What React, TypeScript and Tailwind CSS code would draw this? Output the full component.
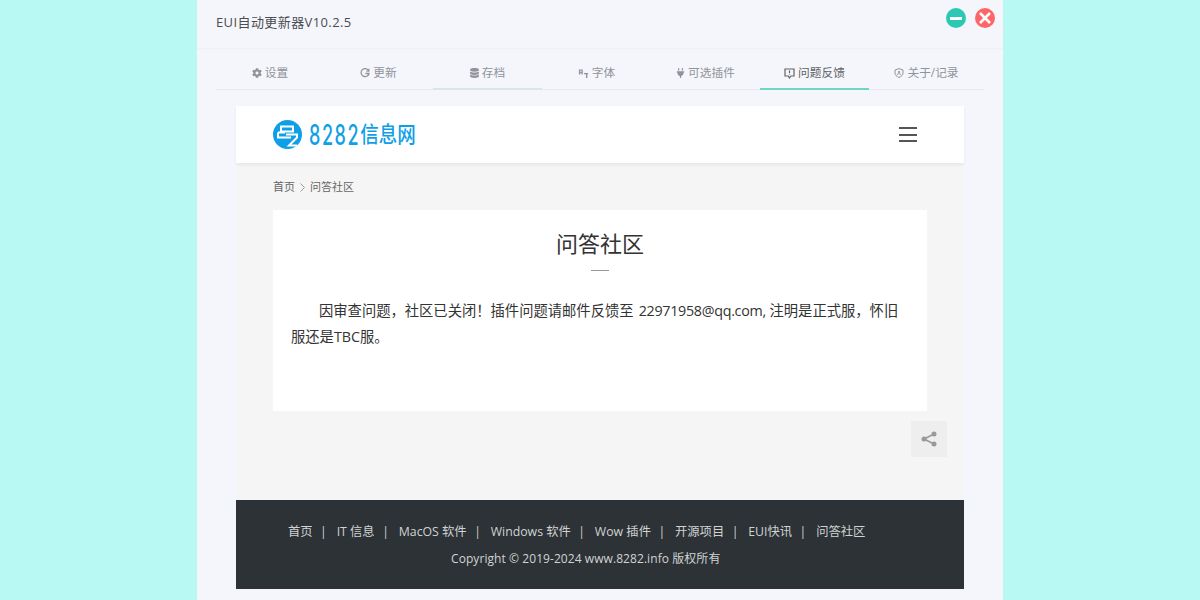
import { FaCog, FaDatabase, FaPlug } from 'react-icons/fa';
import type { ReactNode } from 'react';

const font = 'font-["Open_Sans","Noto_Sans_CJK_SC",sans-serif]';

const tabs: { label: string; icon: ReactNode; active?: boolean; visited?: boolean }[] = [
  { label: '设置', icon: <FaCog className="w-[10px] h-[10px]" /> },
  {
    label: '更新',
    icon: (
      <svg className="w-[10px] h-[10px]" viewBox="0 0 10 10" fill="none" stroke="currentColor" strokeWidth="1.300">
        <path d="M8.500 2.500A4 4 0 1 0 9 5.500H5.500" />
        <path d="M8.800 .8v2.400H6.400" />
      </svg>
    ),
  },
  { label: '存档', icon: <FaDatabase className="w-[9px] h-[10px]" />, visited: true },
  {
    label: '字体',
    icon: (
      <svg className="w-[11px] h-[11px]" viewBox="0 0 12 12" fill="currentColor">
        <path d="M1 1.500h4.200v5.500H3.700V5.500H2.500V7H1V1.500zm1.500 1.200V4.300h1.200V2.700H2.500zM6.500 5.500h4.500v1.200h-.8V11H8.700V6.700H6.500V5.500z" />
      </svg>
    ),
  },
  { label: '可选插件', icon: <FaPlug className="w-[9px] h-[10px]" /> },
  {
    label: '问题反馈',
    icon: (
      <svg className="w-[11px] h-[11px]" viewBox="0 0 11 11" fill="none" stroke="currentColor" strokeWidth="1.200">
        <path d="M1 1h9v7H6.800L5.500 10 4.200 8H1z" />
        <path d="M5.500 2.500v2.500M5.500 5.800v.8" />
      </svg>
    ),
    active: true,
  },
  {
    label: '关于/记录',
    icon: (
      <svg className="w-[10px] h-[10px]" viewBox="0 0 10 10" fill="none" stroke="currentColor" strokeWidth="1">
        <path d="M5 .6l4 1.400v3c0 2.200-1.800 3.600-4 4.400C2.800 8.600 1 7.200 1 5V2z" />
        <circle cx="5" cy="4" r="1.100" fill="currentColor" stroke="none" />
        <path d="M3 7c.4-1 1-1.300 2-1.300S6.600 6 7 7" />
      </svg>
    ),
  },
];

const footerLinks = ['首页', 'IT 信息', 'MacOS 软件', 'Windows 软件', 'Wow 插件', '开源项目', 'EUI快讯', '问答社区'];

function Logo() {
  return (
    <div className="flex items-center gap-[7px]">
      <svg className="w-[29px] h-[29px]" viewBox="0 0 29 29">
        <circle cx="14.500" cy="14.500" r="14.500" fill="#0f9fe6" />
        <g fill="none" stroke="#fff" strokeWidth="2">
          <path d="M8 6.500h12v5H8z" />
          <path d="M5 12.500h7M5 12.500v5h13" />
          <path d="M13 14.500h11v3l-8 8h8" />
        </g>
      </svg>
      <span className="flex items-center text-[#0f9fe6] leading-none">
        <span className='inline-block translate-y-[1px] scale-y-[1.55] font-["Inter",sans-serif] text-[18px] font-medium tracking-[1.6px]'>8282</span>
        <span className='inline-block -translate-y-[1px] scale-y-[1.15] font-["Noto_Sans_CJK_SC",sans-serif] text-[18.500px] font-medium'>信息网</span>
      </span>
    </div>
  );
}

export default function App() {
  return (
    <div className={`h-[600px] overflow-hidden bg-[#b9f9f4] flex justify-center ${font}`}>
      <div className="w-[806px] h-full bg-[#f5f6fb] flex flex-col">
        <div className="h-[49px] shrink-0 border-b border-[#eff0f5] pl-[19px] pr-[8px] flex items-start justify-between">
          <span className="mt-[13px] text-[13px] leading-[18px] tracking-[0.4px] text-[#4a4d52]">EUI自动更新器V10.2.5</span>
          <div className="mt-[8px] flex gap-[9px]">
            <div className="w-5 h-5 rounded-full bg-[#2dc8b4] flex items-center justify-center">
              <div className="w-[12px] h-[3px] bg-white" />
            </div>
            <div className="w-5 h-5 rounded-full bg-[#fd6568] flex items-center justify-center">
              <svg className="w-[12px] h-[12px]" viewBox="0 0 12 12" stroke="#fff" strokeWidth="2.600">
                <path d="M1 1l10 10M11 1L1 11" />
              </svg>
            </div>
          </div>
        </div>

        <div className="mx-[19px] h-[41px] shrink-0 grid grid-cols-[108px_repeat(5,109px)_1fr] border-b border-[#e8eaee]">
          {tabs.map((tab) => (
            <div
              key={tab.label}
              className={`-mb-px flex items-center justify-center gap-[3px] pt-[9px] text-[11.700px] border-b-2 ${
                tab.active
                  ? 'border-[#6fd5c4] text-[#606266]'
                  : tab.visited
                    ? 'border-[#d4e8e4] text-[#909399]'
                    : 'border-transparent text-[#909399]'
              }`}
            >
              {tab.icon}
              <span>{tab.label}</span>
            </div>
          ))}
        </div>

        <div className="mt-[16px] mx-[39px] flex flex-col">
          <div className="h-[57px] bg-white shadow-[0_2px_3px_rgba(0,0,0,0.06)] relative flex items-center justify-between pl-[37px] pr-[47px]">
            <Logo />
            <div className="flex flex-col gap-[4.500px]">
              <div className="w-[18px] h-[2px] bg-[#555]" />
              <div className="w-[18px] h-[2px] bg-[#555]" />
              <div className="w-[18px] h-[2px] bg-[#555]" />
            </div>
          </div>

          <div className="h-[337px] bg-[#f5f5f5] px-[37px] flex flex-col">
            <div className="h-[47px] shrink-0 pt-[2px] flex items-center gap-[5px] text-[11px] text-[#666]">
              <span>首页</span>
              <svg className="w-[5px] h-[9px]" viewBox="0 0 5 9" fill="none" stroke="#999">
                <path d="M.5.5l4 4-4 4" />
              </svg>
              <span>问答社区</span>
            </div>
            <div className="w-[654px] h-[201px] shrink-0 bg-white px-[18px]">
              <h1 className="mt-[18px] text-center text-[22px] leading-[30px] font-normal text-[#333]">问答社区</h1>
              <div className="mt-[12px] mx-auto w-[18px] h-px bg-[#999]" />
              <p className="mt-[27px] text-[14.300px] leading-[26px] text-[#333] indent-[28px]">
                因审查问题，社区已关闭！插件问题请邮件反馈至 <span className="ml-[1.500px] tracking-[-0.3px]">22971958@qq.com,</span> 注明是正式服，怀旧服还是TBC服。
              </p>
            </div>
            <div className="mt-[10px] self-end -mr-[20px] w-[36px] h-[36px] bg-[#eeeeee] flex items-center justify-center">
              <svg className="w-[16px] h-[16px]" viewBox="0 0 16 16" fill="#999">
                <circle cx="3" cy="8" r="2.500" />
                <circle cx="13" cy="3" r="2.500" />
                <circle cx="13" cy="13" r="2.500" />
                <path d="M3 8l10-5M3 8l10 5" stroke="#999" strokeWidth="1.500" />
              </svg>
            </div>
          </div>

          <div className="h-[89px] bg-[#2c3235] flex flex-col text-[#d0d2d4]">
            <div className="mt-[22px] pl-[52px] flex text-[12.300px] leading-[20px]">
              {footerLinks.map((link, i) => (
                <span key={link} className="flex">
                  {i > 0 && <span className="ml-[7.500px] mr-[9.800px]">|</span>}
                  {link}
                </span>
              ))}
            </div>
            <div className="mt-[7px] pl-[215px] text-[12px] tracking-[0.07px] leading-[20px]">Copyright © 2019-2024 www.8282.info 版权所有</div>
          </div>
        </div>
      </div>
    </div>
  );
}
